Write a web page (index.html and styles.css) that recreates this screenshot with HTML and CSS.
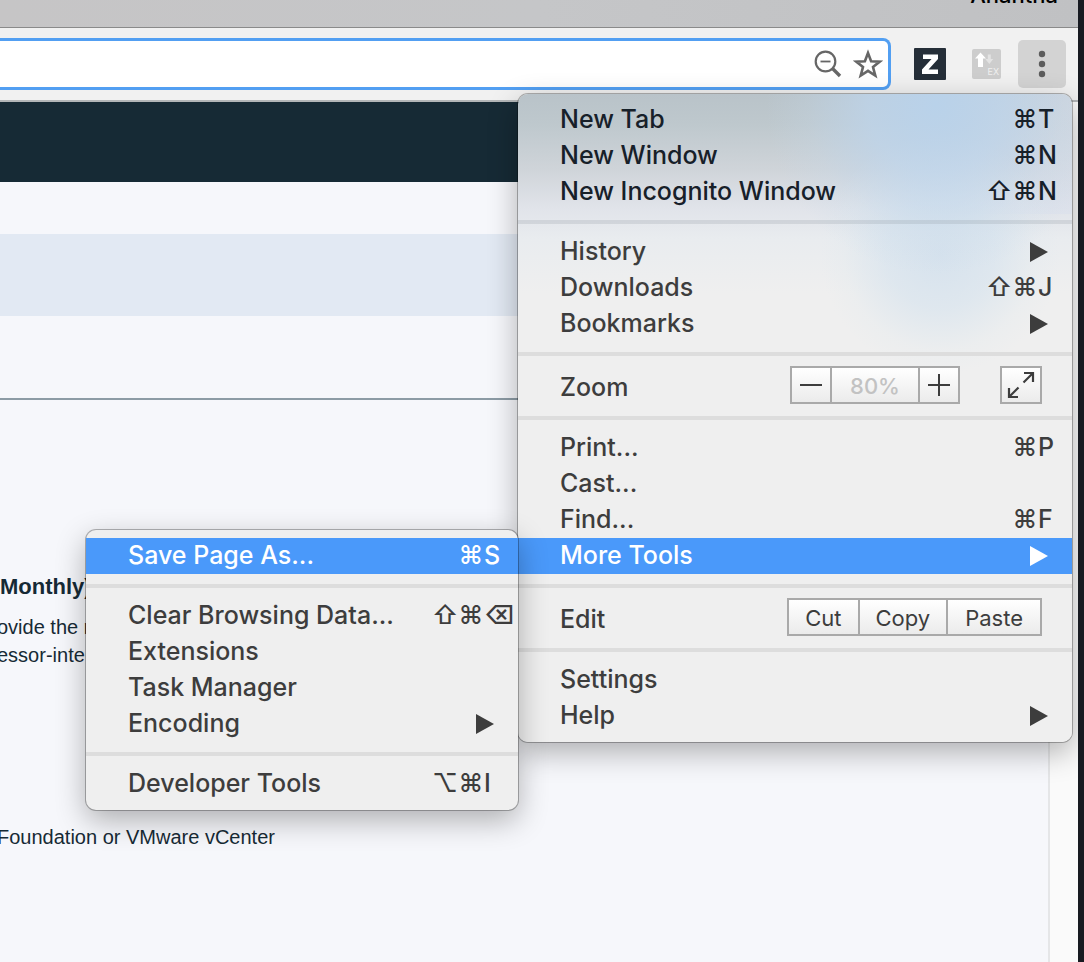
FILE: index.html
```html
<!DOCTYPE html>
<html lang="en">
<head>
<meta charset="utf-8">
<title>Browser menu</title>
<link rel="stylesheet" href="styles.css">
</head>
<body>
<div class="window">
  <header class="titlebar"><span class="profile">Anantha</span></header>
  <div class="toolbar">
    <div class="omnibox">
      <input class="address" type="text" aria-label="Address and search bar">
      <button class="icon-button" aria-label="Zoom level">
        <svg width="28" height="28" viewBox="0 0 28 28" fill="none" stroke="#666"><circle cx="11.500" cy="11.500" r="9.800" stroke-width="2.200"/><path d="M6.500 11.500h10" stroke-width="1.800"/><path d="M18.500 18.500l7.500 7.500" stroke-width="3.400"/></svg>
      </button>
      <button class="icon-button" aria-label="Bookmark this page">
        <svg width="30" height="30" viewBox="0 0 30 30" fill="none" stroke="#666" stroke-width="2.600"><path d="M15 4l3.100 8.200 8.700.4-6.800 5.500 2.300 8.500-7.300-4.800-7.300 4.800 2.300-8.500-6.800-5.500 8.700-.4z"/></svg>
      </button>
    </div>
    <button class="extension" aria-label="Z extension">
      <svg width="32" height="32" viewBox="0 0 32 32"><rect width="32" height="32" rx="1" fill="#252e38"/><path d="M9 6.500h15v4.500L14.500 21.500H24V26H8v-4.500L17.500 11H9z" fill="#fff"/></svg>
    </button>
    <button class="extension" aria-label="EX extension">
      <svg width="30" height="30" viewBox="0 0 30 30"><rect width="29" height="30" rx="2" fill="#cdcdcd"/><path d="M8.500 3.500l5.500 6h-3V18H6V9.500H3z" fill="#fff"/><path d="M15.800 5.500h3V10h2.500L17.300 15l-4-5h2.500z" fill="#e3e3e3"/><text x="15.500" y="26" class="badge-text">EX</text></svg>
    </button>
    <button class="menu-button" aria-label="Menu" aria-expanded="true">
      <svg width="8" height="28" viewBox="0 0 8 28" fill="#5c5c5c"><circle cx="4" cy="4" r="3.200"/><circle cx="4" cy="14" r="3.200"/><circle cx="4" cy="24" r="3.200"/></svg>
    </button>
  </div>

  <main class="page">
    <div class="content">
      <div class="site-header"></div>
      <div class="band"></div>
      <hr class="rule">
      <section class="plan">
        <h2>Monthly)</h2>
        <p>ovide the r<br>essor-inte</p>
        <p class="note">Foundation or VMware vCenter</p>
      </section>
    </div>
  </main>

  <ul class="menu main-menu" role="menu">
    <li class="deep"><button class="item" role="menuitem">New Tab<span class="keys"><i>⌘</i><b>T</b></span></button></li>
    <li class="deep"><button class="item" role="menuitem">New Window<span class="keys"><i>⌘</i><b>N</b></span></button></li>
    <li class="deep"><button class="item" role="menuitem">New Incognito Window<span class="keys"><i>⇧</i><i>⌘</i><b>N</b></span></button></li>
    <li class="separator" role="separator"></li>
    <li><button class="item" role="menuitem">History<span class="arrow"></span></button></li>
    <li><button class="item" role="menuitem">Downloads<span class="keys"><i>⇧</i><i>⌘</i><b>J</b></span></button></li>
    <li><button class="item" role="menuitem">Bookmarks<span class="arrow"></span></button></li>
    <li class="separator" role="separator"></li>
    <li class="control-row">
      <span>Zoom</span>
      <div class="controls">
        <div class="group zoom-group">
          <button aria-label="Zoom out"><svg width="22" height="22" viewBox="0 0 22 22"><path d="M0 11h22" stroke="#3d3d3d" stroke-width="2"/></svg></button>
          <span class="zoom-value">80%</span>
          <button aria-label="Zoom in"><svg width="22" height="22" viewBox="0 0 22 22"><path d="M0 11h22M11 0v22" stroke="#3d3d3d" stroke-width="2"/></svg></button>
        </div>
        <div class="group">
          <button aria-label="Full screen"><svg width="28" height="28" viewBox="0 0 28 28" fill="none" stroke="#3d3d3d" stroke-width="2.200"><path d="M17 2h9v9M26 2l-9.500 9.500M2 17v9h9M2 26l9.500-9.500"/></svg></button>
        </div>
      </div>
    </li>
    <li class="separator" role="separator"></li>
    <li><button class="item" role="menuitem">Print...<span class="keys"><i>⌘</i><b>P</b></span></button></li>
    <li><button class="item" role="menuitem">Cast...</button></li>
    <li><button class="item" role="menuitem">Find...<span class="keys"><i>⌘</i><b>F</b></span></button></li>
    <li class="parent">
      <button class="item selected" role="menuitem" aria-expanded="true">More Tools<span class="arrow"></span></button>
      <ul class="menu submenu" role="menu">
        <li><button class="item selected" role="menuitem">Save Page As...<span class="keys"><i>⌘</i><b>S</b></span></button></li>
        <li class="separator" role="separator"></li>
        <li><button class="item" role="menuitem">Clear Browsing Data...<span class="keys"><i>⇧</i><i>⌘</i><b>⌫</b></span></button></li>
        <li><button class="item" role="menuitem">Extensions</button></li>
        <li><button class="item" role="menuitem">Task Manager</button></li>
        <li><button class="item" role="menuitem">Encoding<span class="arrow"></span></button></li>
        <li class="separator" role="separator"></li>
        <li><button class="item" role="menuitem">Developer Tools<span class="keys"><i>⌥</i><i>⌘</i><b>I</b></span></button></li>
      </ul>
    </li>
    <li class="separator" role="separator"></li>
    <li class="control-row">
      <span>Edit</span>
      <div class="controls">
        <div class="group edit-group"><button>Cut</button><button>Copy</button><button>Paste</button></div>
      </div>
    </li>
    <li class="separator" role="separator"></li>
    <li><button class="item" role="menuitem">Settings</button></li>
    <li><button class="item" role="menuitem">Help<span class="arrow"></span></button></li>
  </ul>
</div>
</body>
</html>
```
FILE: styles.css
```css
* { box-sizing: border-box; }
body {
  margin: 0;
  background: #171a21;
  font-family: Inter, "DejaVu Sans", sans-serif;
  color: #3d3d3d;
}
button { font: inherit; color: inherit; border: 0; background: none; padding: 0; margin: 0; }
svg { display: block; }
ul { list-style: none; margin: 0; padding: 0; }

.window {
  position: relative;
  display: flex;
  flex-direction: column;
  min-height: 100vh;
  margin-right: 6px;
  overflow: hidden;
  background: #f6f7fb;
}
.titlebar {
  display: flex;
  justify-content: flex-end;
  height: 28px;
  padding-right: 20px;
  overflow: hidden;
  background: linear-gradient(90deg, #c6c5c6, #c5c6c8 50%, #c0c1c3);
  border-bottom: 1px solid #8a8a8a;
}
.profile { margin-top: -19px; font-size: 22px; font-weight: 500; line-height: 28px; color: #000; }

.toolbar {
  display: flex;
  align-items: center;
  height: 74px;
  padding-right: 12px;
  background: #f1f1f1;
  border-bottom: 2px solid #b3b6b8;
}
.omnibox {
  flex: 1;
  display: flex;
  align-items: center;
  gap: 11px;
  height: 52px;
  margin-right: 23px;
  padding-right: 5px;
  background: #fff;
  border: 3px solid #529ff2;
  border-left: 0;
  border-radius: 0 8px 8px 0;
}
.address { flex: 1; min-width: 0; height: 40px; border: 0; outline: 0; background: none; font-size: 26px; }
.extension { margin-right: 26px; }
.extension + .extension { margin-right: 16px; }
.badge-text { font: 9px Inter, sans-serif; fill: #f0f0f0; }
.menu-button {
  display: flex;
  align-items: center;
  justify-content: center;
  width: 48px;
  height: 48px;
  border-radius: 5px;
  background: #d3d3d3;
}

.page { flex: 1; padding-right: 28px; background: #fafafa; }
.content { height: 100%; min-height: 860px; background: #f6f7fb; border-right: 2px solid #e5e6e8; }
.site-header { height: 80px; background: #162a35; }
.band { height: 82px; margin-top: 52px; background: #e2e9f3; }
.rule { height: 2px; margin: 82px 0 0; border: 0; background: #8c9ba5; }
.plan { padding-top: 173px; font-family: "Liberation Sans", Arial, sans-serif; color: #162a35; }
.plan h2 { margin: 0 0 12px; font-size: 22px; line-height: 28px; }
.plan p { margin: 0 0 0 -3px; font-size: 20px; line-height: 28px; }
.plan .note { margin-top: 154px; }

.menu {
  position: absolute;
  padding: 8px 0;
  font-size: 25px;
  font-weight: 500;
  line-height: 32px;
  background: #efefef;
  border-radius: 10px;
  box-shadow: 0 0 0 1px rgba(0, 0, 0, 0.28), 0 10px 30px rgba(0, 0, 0, 0.3);
}
.main-menu {
  top: 94px;
  right: 6px;
  width: 554px;
  background:
    radial-gradient(ellipse 170px 170px at 418px 10px, rgba(185, 210, 234, 1), rgba(190, 213, 236, 0.75) 40%, rgba(196, 216, 234, 0.25) 75%, rgba(200, 216, 232, 0)),
    radial-gradient(ellipse 120px 120px at 422px 160px, rgba(212, 225, 237, 0.9), rgba(214, 227, 238, 0.65) 45%, rgba(222, 232, 238, 0.2) 80%, rgba(230, 236, 238, 0)),
    linear-gradient(90deg, rgba(218, 224, 236, 0) 380px, rgba(218, 224, 236, 0.6)),
    linear-gradient(180deg, #b9c3c9 0, #bec8cd 30px, #cfd4d9 75px, #e1e4ea 115px, #e9ecef 145px, #efefef 200px);
  background-size: auto, auto, 100% 120px, auto;
  background-repeat: no-repeat;
}
.submenu { top: -8px; right: 100%; width: 432px; }
.parent { position: relative; }

.item {
  display: flex;
  justify-content: space-between;
  align-items: center;
  width: 100%;
  height: 36px;
  padding: 0 0 3px 42px;
  white-space: nowrap;
}
.deep { color: #172029; }
.selected { background: #4a99fa; color: #fff; }
.keys { display: flex; }
.keys i, .keys b { font-style: normal; font-weight: 500; }
.keys i { width: 26px; text-align: center; }
.keys b { width: 34px; text-align: left; }
.arrow {
  width: 18px;
  height: 20px;
  margin: 3px 24px 0 0;
  background: currentColor;
  clip-path: polygon(0 0, 100% 50%, 0 100%);
}
.separator { height: 4px; margin: 10px 0; background: #dddddd; }
.deep + .separator { background: rgba(130, 140, 150, 0.2); }

.control-row {
  display: flex;
  justify-content: space-between;
  align-items: flex-start;
  height: 40px;
  padding: 0 30px 0 42px;
  line-height: 42px;
}
.controls { display: flex; gap: 40px; }
.group {
  display: flex;
  height: 38px;
  border: 2px solid #a9a9a9;
  background: linear-gradient(#fff, #ebebeb);
  font-size: 22px;
  line-height: 34px;
}
.group > * { display: flex; align-items: center; justify-content: center; min-width: 38px; }
.group > * + * { border-left: 2px solid #a9a9a9; }
.zoom-group > * + * { min-width: 40px; }
.zoom-group .zoom-value { width: 88px; padding-top: 2px; color: #c2c2c2; }
.edit-group button { padding: 2px 16px 0; font-weight: 400; }
.edit-group button:last-child { padding: 2px 17px 0; }
```
